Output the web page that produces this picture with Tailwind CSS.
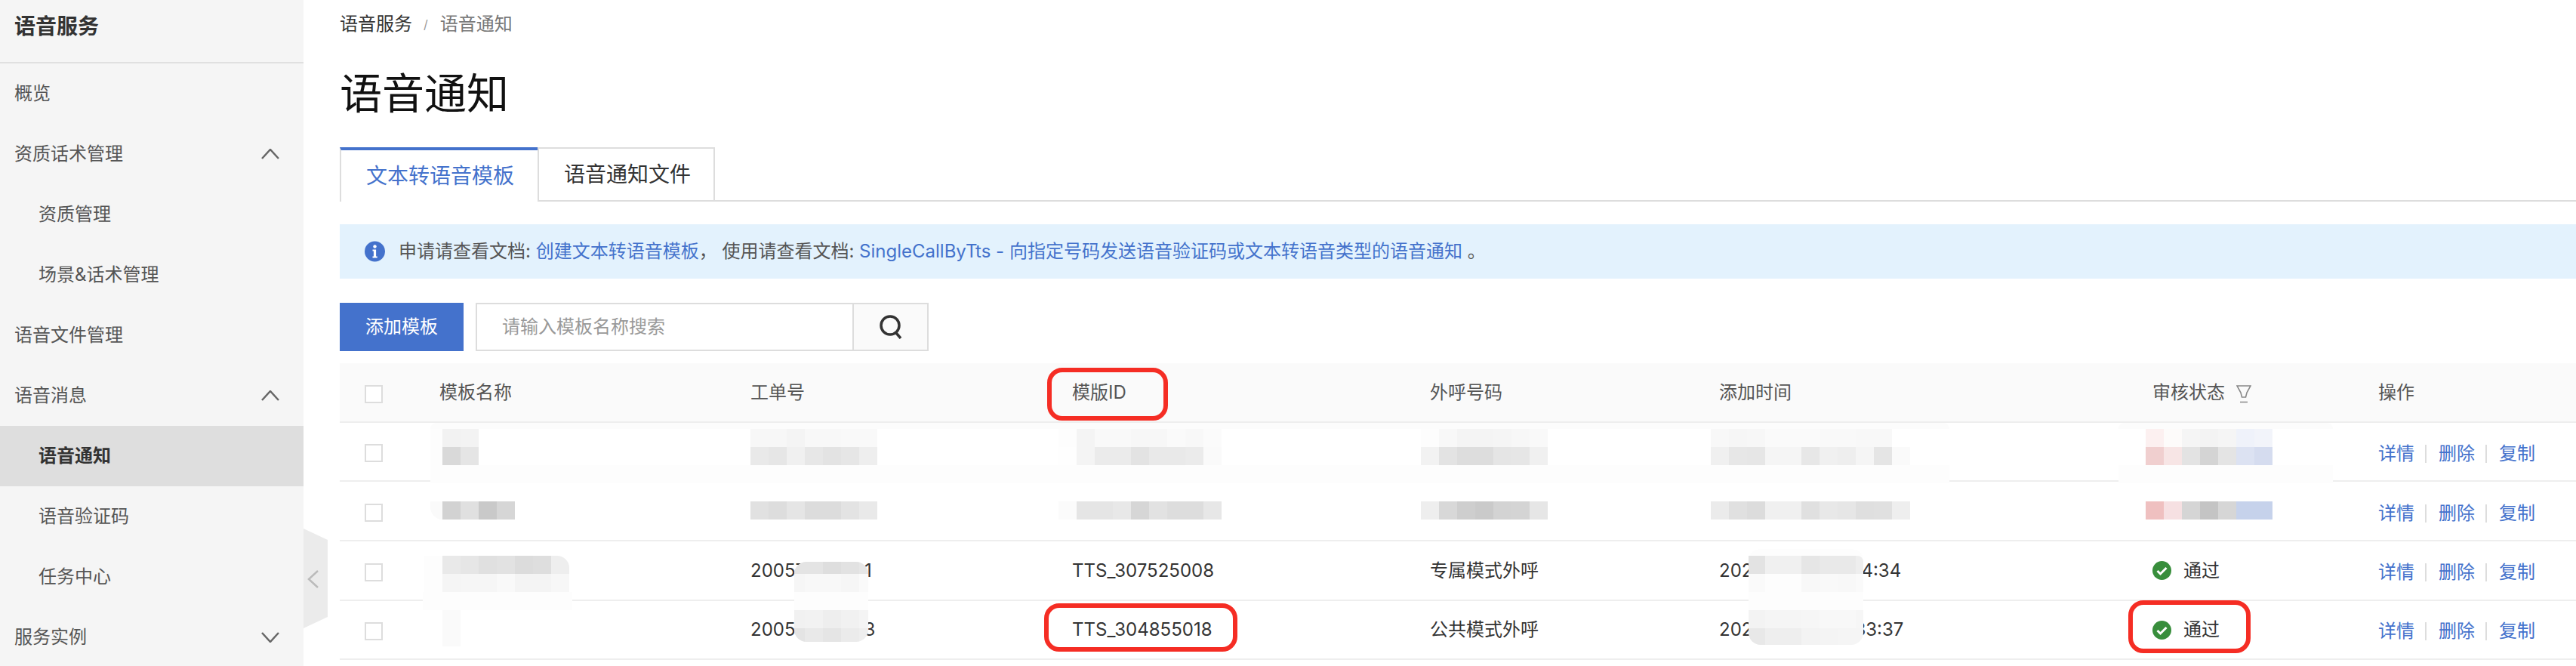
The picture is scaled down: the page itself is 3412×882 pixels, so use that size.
<!DOCTYPE html>
<html lang="zh-CN">
<head>
<meta charset="UTF-8">
<title>语音通知</title>
<script src="https://cdn.jsdelivr.net/npm/@tailwindcss/browser@4"></script>
</head>
<body class="bg-white font-['Inter','Noto_Sans_CJK_SC',sans-serif] text-[24px] text-[#333]">
<div class="relative flex w-[3412px] h-[882px] overflow-hidden">

  <!-- sidebar -->
  <aside class="w-[402px] shrink-0 bg-[#f5f5f5] text-[#555]">
    <div class="h-[84px] pb-[12px] pl-[19px] flex items-center border-b-2 border-[#e0e0e0] text-[28px] font-semibold text-[#333]">语音服务</div>
    <div class="h-[80px] pl-[19px] flex items-center">概览</div>
    <div class="h-[80px] pl-[19px] pr-[32px] flex items-center justify-between">资质话术管理
      <svg class="w-[24px] h-[14px]" viewBox="0 0 24 14" fill="none" stroke="#666" stroke-width="2.5"><path d="M1 13 12 1l11 12"/></svg>
    </div>
    <div class="h-[80px] pl-[51px] flex items-center">资质管理</div>
    <div class="h-[80px] pl-[51px] flex items-center">场景&amp;话术管理</div>
    <div class="h-[80px] pl-[19px] flex items-center">语音文件管理</div>
    <div class="h-[80px] pl-[19px] pr-[32px] flex items-center justify-between">语音消息
      <svg class="w-[24px] h-[14px]" viewBox="0 0 24 14" fill="none" stroke="#666" stroke-width="2.5"><path d="M1 13 12 1l11 12"/></svg>
    </div>
    <div class="h-[80px] pl-[51px] flex items-center bg-[#dedede] font-semibold text-[#333]">语音通知</div>
    <div class="h-[80px] pl-[51px] flex items-center">语音验证码</div>
    <div class="h-[80px] pl-[51px] flex items-center">任务中心</div>
    <div class="h-[80px] pl-[19px] pr-[32px] flex items-center justify-between">服务实例
      <svg class="w-[24px] h-[14px]" viewBox="0 0 24 14" fill="none" stroke="#666" stroke-width="2.5"><path d="M1 1l11 12L23 1"/></svg>
    </div>
  </aside>

  <!-- main -->
  <main class="flex-1 pl-[48px]">
    <div class="h-[92px] pb-[28px] flex items-center">
      <span>语音服务</span>
      <span class="ml-[15px] text-[16px] text-[#999]">/</span>
      <span class="ml-[16px] text-[#777]">语音通知</span>
    </div>
    <h1 class="h-[64px] flex items-center text-[56px] leading-none font-normal text-[#111]">语音通知</h1>
    <div class="mt-[39px] h-[72px] flex border-b-2 border-[#ddd] text-[28px]">
      <div class="w-[262px] h-[72px] pl-[33px] flex items-center border-t-4 border-l-2 border-t-[#4472cc] border-l-[#ddd] bg-white text-[#4472cc]">文本转语音模板</div>
      <div class="w-[235px] h-[70px] pl-[33px] flex items-center border-2 border-b-0 border-[#ddd]">语音通知文件</div>
    </div>

    <div class="mt-[30px] h-[72px] pl-[33px] flex items-center bg-[#e3f2fd] text-[#555]">
      <svg class="w-[27px] h-[28px] shrink-0" viewBox="0 0 27 28"><circle cx="13.5" cy="14" r="13.5" fill="#4472cc"/><circle cx="13.5" cy="7.5" r="2.2" fill="#fff"/><path d="M10.5 11.5h4.6v9h1.6v2h-6.2v-2h1.4v-7h-1.4z" fill="#fff"/></svg>
      <p class="ml-[18px] whitespace-pre">申请请查看文档: <a class="text-[#4472cc]">创建文本转语音模板</a>， 使用请查看文档: <a class="text-[#4472cc]">SingleCallByTts - 向指定号码发送语音验证码或文本转语音类型的语音通知</a> 。</p>
    </div>

    <div class="mt-[32px] flex">
      <button class="w-[164px] h-[64px] bg-[#4472cc] text-white">添加模板</button>
      <div class="ml-[16px] w-[600px] h-[64px] flex border-2 border-[#ddd]">
        <div class="w-[499px] pl-[33px] flex items-center border-r-2 border-[#ddd] text-[#999]">请输入模板名称搜索</div>
        <div class="flex-1 flex items-center justify-center bg-[#fafafa]">
          <svg class="w-[32px] h-[32px]" viewBox="0 0 32 32" fill="none" stroke="#333" stroke-width="3.5"><circle cx="15" cy="14" r="12"/><path d="M23 24l6 7"/></svg>
        </div>
      </div>
    </div>

    <!-- table -->
    <div class="mt-[16px]">
      <div class="h-[79px] grid grid-cols-[132px_412px_426px_474px_383px_574px_299px_1fr] items-center bg-[#fafafa] border-b-2 border-[#eee] text-[#555]">
        <div class="pl-[33px] pt-[4px]"><div class="w-[24px] h-[24px] border-2 border-[#ddd] bg-white"></div></div>
        <div>模板名称</div><div>工单号</div><div>模版ID</div><div>外呼号码</div><div>添加时间</div>
        <div class="flex items-center">审核状态
          <svg class="ml-[15px] mt-[4px] w-[20px] h-[24px]" viewBox="0 0 20 24" fill="none" stroke="#888" stroke-width="1.6"><path d="M1 1h18l-5 9-1.500 6H7.500L6 10zM5 22.500h10"/></svg>
        </div>
        <div>操作</div>
      </div>

      <div class="h-[78px] grid grid-cols-[132px_412px_426px_474px_383px_574px_299px_1fr] items-center border-b-2 border-[#eee]">
        <div class="pl-[33px] pt-[4px]"><div class="w-[24px] h-[24px] border-2 border-[#ddd]"></div></div>
        <div></div><div></div><div></div><div></div><div></div><div></div>
        <div class="pt-[6px] flex items-center text-[#4472cc]">详情<i class="ml-[14px] mr-[16px] w-[2px] h-[24px] bg-[#ddd]"></i>删除<i class="ml-[14px] mr-[16px] w-[2px] h-[24px] bg-[#ddd]"></i>复制</div>
      </div>

      <div class="h-[79px] grid grid-cols-[132px_412px_426px_474px_383px_574px_299px_1fr] items-center border-b-2 border-[#eee]">
        <div class="pl-[33px] pt-[4px]"><div class="w-[24px] h-[24px] border-2 border-[#ddd]"></div></div>
        <div></div><div></div><div></div><div></div><div></div><div></div>
        <div class="pt-[6px] flex items-center text-[#4472cc]">详情<i class="ml-[14px] mr-[16px] w-[2px] h-[24px] bg-[#ddd]"></i>删除<i class="ml-[14px] mr-[16px] w-[2px] h-[24px] bg-[#ddd]"></i>复制</div>
      </div>

      <div class="h-[79px] grid grid-cols-[132px_412px_426px_474px_383px_574px_299px_1fr] items-center border-b-2 border-[#eee]">
        <div class="pl-[33px] pt-[4px]"><div class="w-[24px] h-[24px] border-2 border-[#ddd]"></div></div>
        <div></div><div>20057<span class="inline-block w-[78px]"></span>1</div><div>TTS_307525008</div><div>专属模式外呼</div><div>202<span class="inline-block w-[144px]"></span>4:34</div>
        <div class="flex items-center">
          <svg class="w-[25px] h-[25px] shrink-0" viewBox="0 0 25 25"><circle cx="12.500" cy="12.500" r="12.500" fill="#388e3c"/><path d="M6.500 13l4 4 8-8" fill="none" stroke="#fff" stroke-width="3"/></svg>
          <span class="ml-[16px]">通过</span>
        </div>
        <div class="pt-[4px] flex items-center text-[#4472cc]">详情<i class="ml-[14px] mr-[16px] w-[2px] h-[24px] bg-[#ddd]"></i>删除<i class="ml-[14px] mr-[16px] w-[2px] h-[24px] bg-[#ddd]"></i>复制</div>
      </div>

      <div class="h-[78px] grid grid-cols-[132px_412px_426px_474px_383px_574px_299px_1fr] items-center border-b-2 border-[#eee]">
        <div class="pl-[33px] pt-[4px]"><div class="w-[24px] h-[24px] border-2 border-[#ddd]"></div></div>
        <div></div><div>2005<span class="inline-block w-[91px]"></span>3</div><div>TTS_304855018</div><div>公共模式外呼</div><div>202<span class="inline-block w-[135px]"></span>33:37</div>
        <div class="flex items-center">
          <svg class="w-[25px] h-[25px] shrink-0" viewBox="0 0 25 25"><circle cx="12.500" cy="12.500" r="12.500" fill="#388e3c"/><path d="M6.500 13l4 4 8-8" fill="none" stroke="#fff" stroke-width="3"/></svg>
          <span class="ml-[16px]">通过</span>
        </div>
        <div class="pt-[4px] flex items-center text-[#4472cc]">详情<i class="ml-[14px] mr-[16px] w-[2px] h-[24px] bg-[#ddd]"></i>删除<i class="ml-[14px] mr-[16px] w-[2px] h-[24px] bg-[#ddd]"></i>复制</div>
      </div>
    </div>
  </main>

  <!-- sidebar collapse handle -->
  <svg class="absolute left-[402px] top-[700px] w-[32px] h-[132px]" viewBox="0 0 32 132"><path d="M0 0l32 15v102L0 132z" fill="#ebebeb"/><path d="M19 56 7 67l12 11" fill="none" stroke="#bbb" stroke-width="2.500"/></svg>

  <!-- masked areas -->
  <div class="absolute left-[570px] top-[560px] w-[2012px] h-[8px] rounded-t-[16px] bg-[#fcfcfc]"></div>
  <div class="absolute left-[570px] top-[568px] w-[16px] h-[48px] bg-[#fdfdfd]"></div>
  <div class="absolute left-[570px] top-[616px] w-[2012px] h-[24px] bg-[#fdfdfd]"></div>
  <div class="absolute left-[2806px] top-[560px] w-[284px] h-[8px] rounded-t-[16px] bg-[#fcfcfc]"></div>
  <div class="absolute left-[2806px] top-[616px] w-[284px] h-[24px] bg-[#fdfdfd]"></div>
  <div class="absolute left-[570px] top-[664px] w-[16px] h-[24px] rounded-bl-[16px] bg-[#fafafa]"></div>
  <div class="absolute left-[562px] top-[736px] w-[24px] h-[48px] bg-[#fdfdfd]"></div>
  <div class="absolute left-[560px] top-[784px] w-[198px] h-[24px] bg-[#fdfdfd]"></div>
  <div class="absolute left-[586px] top-[808px] w-[24px] h-[48px] bg-[#fafafa]"></div>

  <div class="absolute left-[586px] top-[568px] grid grid-cols-[repeat(2,24px)] auto-rows-[24px]">
    <i class="bg-[#f2f2f2]"></i><i class="bg-[#f3f3f3]"></i>
    <i class="bg-[#d9d9d9]"></i><i class="bg-[#e5e5e5]"></i>
  </div>
  <div class="absolute left-[586px] top-[664px] grid grid-cols-[repeat(4,24px)] auto-rows-[24px]">
    <i class="bg-[#d2d2d2]"></i><i class="bg-[#e0e0e0]"></i><i class="bg-[#c9c9c9]"></i><i class="bg-[#d6d6d6]"></i>
  </div>
  <div class="absolute left-[586px] top-[736px] grid grid-cols-[repeat(7,24px)] auto-rows-[24px] overflow-hidden rounded-tr-[16px]">
    <i class="bg-[#e9e9e9]"></i><i class="bg-[#e6e6e6]"></i><i class="bg-[#e0e0e0]"></i><i class="bg-[#e2e2e2]"></i><i class="bg-[#dcdcdc]"></i><i class="bg-[#dedede]"></i><i class="bg-[#eeeeee]"></i>
    <i class="bg-[#f5f5f5]"></i><i class="bg-[#f6f6f6]"></i><i class="bg-[#f6f6f6]"></i><i class="bg-[#f9f9f9]"></i><i class="bg-[#f4f4f4]"></i><i class="bg-[#f4f4f4]"></i><i class="bg-[#f7f7f7]"></i>
  </div>

  <div class="absolute left-[994px] top-[568px] grid grid-cols-[repeat(7,24px)] auto-rows-[24px]">
    <i class="bg-[#f7f7f7]"></i><i class="bg-[#f7f7f7]"></i><i class="bg-[#f4f4f4]"></i><i class="bg-[#f8f8f8]"></i><i class="bg-[#f8f8f8]"></i><i class="bg-[#f9f9f9]"></i><i class="bg-[#f9f9f9]"></i>
    <i class="bg-[#e9e9e9]"></i><i class="bg-[#e6e6e6]"></i><i class="bg-[#f0f0f0]"></i><i class="bg-[#e7e7e7]"></i><i class="bg-[#e3e3e3]"></i><i class="bg-[#e6e6e6]"></i><i class="bg-[#eeeeee]"></i>
  </div>
  <div class="absolute left-[994px] top-[664px] grid grid-cols-[repeat(7,24px)] auto-rows-[24px]">
    <i class="bg-[#e1e1e1]"></i><i class="bg-[#dddddd]"></i><i class="bg-[#e5e5e5]"></i><i class="bg-[#dcdcdc]"></i><i class="bg-[#dcdcdc]"></i><i class="bg-[#e3e3e3]"></i><i class="bg-[#e9e9e9]"></i>
  </div>
  <div class="absolute left-[1052px] top-[744px] grid grid-cols-[14px_24px_24px_24px_12px] grid-rows-[16px_24px_24px_24px_18px] overflow-hidden rounded-[16px]">
    <i class="bg-[#e4e4e4]"></i><i class="bg-[#e4e4e4]"></i><i class="bg-[#dedede]"></i><i class="bg-[#e2e2e2]"></i><i class="bg-[#e6e6e6]"></i>
    <i class="bg-[#f6f6f6]"></i><i class="bg-[#f8f8f8]"></i><i class="bg-[#f8f8f8]"></i><i class="bg-[#f6f6f6]"></i><i class="bg-[#fafafa]"></i>
    <i class="bg-[#fdfdfd]"></i><i class="bg-[#fdfdfd]"></i><i class="bg-[#fdfdfd]"></i><i class="bg-[#fdfdfd]"></i><i class="bg-[#fdfdfd]"></i>
    <i class="bg-[#f1f1f1]"></i><i class="bg-[#f2f2f2]"></i><i class="bg-[#eeeeee]"></i><i class="bg-[#f1f1f1]"></i><i class="bg-[#f4f4f4]"></i>
    <i class="bg-[#e4e4e4]"></i><i class="bg-[#e9e9e9]"></i><i class="bg-[#e5e5e5]"></i><i class="bg-[#ebebeb]"></i><i class="bg-[#eeeeee]"></i>
  </div>

  <div class="absolute left-[1402px] top-[568px] grid grid-cols-[repeat(9,24px)] auto-rows-[24px]">
    <i class="bg-[#fdfdfd]"></i><i class="bg-[#f4f4f4]"></i><i class="bg-[#f9f9f9]"></i><i class="bg-[#f9f9f9]"></i><i class="bg-[#f7f7f7]"></i><i class="bg-[#f7f7f7]"></i><i class="bg-[#fafafa]"></i><i class="bg-[#f8f8f8]"></i><i class="bg-[#fbfbfb]"></i>
    <i class="bg-[#fefefe]"></i><i class="bg-[#f4f4f4]"></i><i class="bg-[#ebebeb]"></i><i class="bg-[#ebebeb]"></i><i class="bg-[#e3e3e3]"></i><i class="bg-[#e9e9e9]"></i><i class="bg-[#e9e9e9]"></i><i class="bg-[#ebebeb]"></i><i class="bg-[#fafafa]"></i>
  </div>
  <div class="absolute left-[1402px] top-[664px] grid grid-cols-[repeat(9,24px)] auto-rows-[24px]">
    <i class="bg-[#fbfbfb]"></i><i class="bg-[#e5e5e5]"></i><i class="bg-[#e5e5e5]"></i><i class="bg-[#e8e8e8]"></i><i class="bg-[#d6d6d6]"></i><i class="bg-[#e2e2e2]"></i><i class="bg-[#dddddd]"></i><i class="bg-[#dddddd]"></i><i class="bg-[#e7e7e7]"></i>
  </div>

  <div class="absolute left-[1882px] top-[568px] grid grid-cols-[repeat(7,24px)] auto-rows-[24px]">
    <i class="bg-[#fdfdfd]"></i><i class="bg-[#f8f8f8]"></i><i class="bg-[#f4f4f4]"></i><i class="bg-[#f4f4f4]"></i><i class="bg-[#f5f5f5]"></i><i class="bg-[#f7f7f7]"></i><i class="bg-[#f9f9f9]"></i>
    <i class="bg-[#f2f2f2]"></i><i class="bg-[#e3e3e3]"></i><i class="bg-[#dddddd]"></i><i class="bg-[#dddddd]"></i><i class="bg-[#e5e5e5]"></i><i class="bg-[#e6e6e6]"></i><i class="bg-[#f0f0f0]"></i>
  </div>
  <div class="absolute left-[1882px] top-[664px] grid grid-cols-[repeat(7,24px)] auto-rows-[24px]">
    <i class="bg-[#eeeeee]"></i><i class="bg-[#d8d8d8]"></i><i class="bg-[#cecece]"></i><i class="bg-[#cacaca]"></i><i class="bg-[#d3d3d3]"></i><i class="bg-[#d4d4d4]"></i><i class="bg-[#e6e6e6]"></i>
  </div>

  <div class="absolute left-[2266px] top-[568px] grid grid-cols-[repeat(11,24px)] auto-rows-[24px]">
    <i class="bg-[#f8f8f8]"></i><i class="bg-[#f6f6f6]"></i><i class="bg-[#f7f7f7]"></i><i class="bg-[#fafafa]"></i><i class="bg-[#fafafa]"></i><i class="bg-[#fafafa]"></i><i class="bg-[#f9f9f9]"></i><i class="bg-[#f9f9f9]"></i><i class="bg-[#f8f8f8]"></i><i class="bg-[#f8f8f8]"></i><i class="bg-white"></i>
    <i class="bg-[#f0f0f0]"></i><i class="bg-[#e7e7e7]"></i><i class="bg-[#e6e6e6]"></i><i class="bg-[#f5f5f5]"></i><i class="bg-[#f5f5f5]"></i><i class="bg-[#e7e7e7]"></i><i class="bg-[#f0f0f0]"></i><i class="bg-[#eeeeee]"></i><i class="bg-[#f5f5f5]"></i><i class="bg-[#e5e5e5]"></i><i class="bg-[#fafafa]"></i>
  </div>
  <div class="absolute left-[2266px] top-[664px] grid grid-cols-[repeat(11,24px)] auto-rows-[24px]">
    <i class="bg-[#ebebeb]"></i><i class="bg-[#e0e0e0]"></i><i class="bg-[#dcdcdc]"></i><i class="bg-[#f0f0f0]"></i><i class="bg-[#f0f0f0]"></i><i class="bg-[#e0e0e0]"></i><i class="bg-[#e8e8e8]"></i><i class="bg-[#e6e6e6]"></i><i class="bg-[#dfdfdf]"></i><i class="bg-[#e0e0e0]"></i><i class="bg-[#eeeeee]"></i>
  </div>
  <div class="absolute left-[2316px] top-[727px] w-[152px] h-[20px] rounded-t-[16px] bg-[#fdfdfd]"></div>
  <div class="absolute left-[2316px] top-[736px] grid grid-cols-[22px_24px_24px_24px_24px_24px_10px] grid-rows-[24px_24px_24px_24px_22px] overflow-hidden rounded-b-[16px] rounded-tr-[8px]">
    <i class="bg-[#e3e3e3]"></i><i class="bg-[#f0f0f0]"></i><i class="bg-[#f0f0f0]"></i><i class="bg-[#e6e6e6]"></i><i class="bg-[#e9e9e9]"></i><i class="bg-[#e9e9e9]"></i><i class="bg-[#eeeeee]"></i>
    <i class="bg-[#fafafa]"></i><i class="bg-[#fdfdfd]"></i><i class="bg-[#fdfdfd]"></i><i class="bg-[#f8f8f8]"></i><i class="bg-[#f9f9f9]"></i><i class="bg-[#f8f8f8]"></i><i class="bg-[#fafafa]"></i>
    <i class="bg-[#fdfdfd]"></i><i class="bg-[#fdfdfd]"></i><i class="bg-[#fdfdfd]"></i><i class="bg-[#fdfdfd]"></i><i class="bg-[#fdfdfd]"></i><i class="bg-[#fdfdfd]"></i><i class="bg-[#fdfdfd]"></i>
    <i class="bg-[#f3f3f3]"></i><i class="bg-[#f5f5f5]"></i><i class="bg-[#f5f5f5]"></i><i class="bg-[#f6f6f6]"></i><i class="bg-[#f8f8f8]"></i><i class="bg-[#f8f8f8]"></i><i class="bg-[#f6f6f6]"></i>
    <i class="bg-[#e8e8e8]"></i><i class="bg-[#eeeeee]"></i><i class="bg-[#eeeeee]"></i><i class="bg-[#f3f3f3]"></i><i class="bg-[#f4f4f4]"></i><i class="bg-[#f5f5f5]"></i><i class="bg-[#f5f5f5]"></i>
  </div>

  <div class="absolute left-[2842px] top-[568px] grid grid-cols-[repeat(7,24px)] auto-rows-[24px]">
    <i class="bg-[#fcf0f0]"></i><i class="bg-[#fdfbfa]"></i><i class="bg-[#f5f5f5]"></i><i class="bg-[#f3f3f3]"></i><i class="bg-[#f5f5f5]"></i><i class="bg-[#eff2fa]"></i><i class="bg-[#f2f4fa]"></i>
    <i class="bg-[#f0cfcf]"></i><i class="bg-[#f7e5e5]"></i><i class="bg-[#e3e3e3]"></i><i class="bg-[#d4d4d4]"></i><i class="bg-[#e4e4e4]"></i><i class="bg-[#dce2f2]"></i><i class="bg-[#d5dcef]"></i>
  </div>
  <div class="absolute left-[2842px] top-[664px] grid grid-cols-[repeat(7,24px)] auto-rows-[24px]">
    <i class="bg-[#efc0c0]"></i><i class="bg-[#f6e0e2]"></i><i class="bg-[#d5d5d5]"></i><i class="bg-[#c4c4c4]"></i><i class="bg-[#d6d6d6]"></i><i class="bg-[#c6d2eb]"></i><i class="bg-[#c6d2eb]"></i>
  </div>

  <!-- red annotations -->
  <div class="absolute left-[1387px] top-[487px] w-[160px] h-[70px] rounded-[20px] border-[6px] border-[#f52d24]"></div>
  <div class="absolute left-[1383px] top-[799px] w-[256px] h-[64px] rounded-[20px] border-[6px] border-[#f52d24]"></div>
  <div class="absolute left-[2819px] top-[795px] w-[162px] h-[70px] rounded-[20px] border-[6px] border-[#f52d24]"></div>
</div>
</body>
</html>
